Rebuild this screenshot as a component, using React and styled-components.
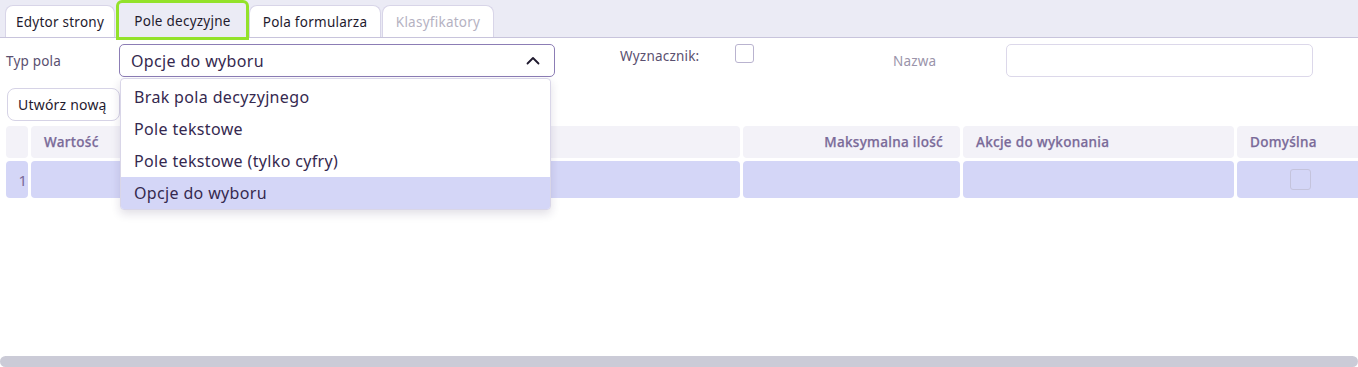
import React from "react";
import styled, { createGlobalStyle, css } from "styled-components";

const Global = createGlobalStyle`
  html, body { margin: 0; padding: 0; background: #ffffff; }
  body { font-family: "Noto Sans", "Open Sans", sans-serif; overflow: hidden; }
  * { box-sizing: border-box; }
`;

const Page = styled.div`
  height: 367px;
  display: flex;
  flex-direction: column;
  position: relative;
`;

const TabBar = styled.div`
  display: flex;
  align-items: flex-end;
  gap: 1px;
  height: 38px;
  padding: 0 0 0 5px;
  background: #ebebf5;
  border-bottom: 1px solid #c8c4dc;
`;

const Tab = styled.div`
  height: 32px;
  display: flex;
  align-items: center;
  justify-content: center;
  width: ${(p) => p.$w}px;
  border: 1px solid #d8d5e8;
  border-bottom: none;
  border-radius: 8px 8px 0 0;
  background: #ffffff;
  font-size: 13.5px;
  letter-spacing: 0.25px;
  color: #1f1a2e;
  ${(p) =>
    p.$active &&
    css`
      background: #ebebf5;
      outline: 3px solid #93e22a;
      outline-offset: 0;
      height: 34px;
      border: none;
      border-radius: 3px 3px 0 0;
      padding-top: 1px;
    `}
  ${(p) =>
    p.$disabled &&
    css`
      color: #b5b2c2;
    `}
`;

const FormRow = styled.div`
  display: flex;
  align-items: center;
  padding: 6px 0 0 6px;
  height: 39px;
`;

const Label = styled.div`
  width: ${(p) => p.$w}px;
  font-size: 13.5px;
  letter-spacing: 0.2px;
  color: ${(p) => (p.$muted ? "#9a94aa" : "#5a5070")};
  align-self: ${(p) => (p.$top ? "flex-start" : "center")};
  padding-top: ${(p) => (p.$top ? "3px" : "0")};
`;

const SelectWrap = styled.div`
  position: relative;
  width: 436px;
  margin-right: 65px;
`;

const SelectBox = styled.div`
  height: 33px;
  border: 1px solid #8c7db5;
  border-radius: 5px;
  display: flex;
  align-items: center;
  justify-content: space-between;
  padding: 0 14px 0 11px;
  font-size: 16px;
  letter-spacing: 0.35px;
  color: #35294f;
  background: #fff;
`;

const Menu = styled.div`
  position: absolute;
  top: 34px;
  left: 1px;
  width: 431px;
  background: #fff;
  border: 1px solid #d9d6e8;
  border-radius: 4px;
  box-shadow: 0 4px 10px rgba(40, 30, 80, 0.14);
  padding: 2px 0 0;
  z-index: 10;
  overflow: hidden;
`;

const MenuItem = styled.div`
  height: 32px;
  display: flex;
  align-items: center;
  padding-left: 13px;
  font-size: 16px;
  letter-spacing: 0.35px;
  color: #35294f;
  background: ${(p) => (p.$selected ? "#d4d6f7" : "#fff")};
`;

const Check = styled.div`
  width: ${(p) => p.$s}px;
  height: ${(p) => p.$s}px;
  border: 1px solid ${(p) => p.$c || "#b9b3cf"};
  border-radius: 3px;
  background: transparent;
  align-self: ${(p) => (p.$top ? "flex-start" : "center")};
  margin-right: ${(p) => p.$mr || 0}px;
`;

const TextInput = styled.div`
  width: 307px;
  height: 33px;
  border: 1px solid #dcd8ea;
  border-radius: 5px;
  background: #fff;
`;

const ActionRow = styled.div`
  padding: 11px 0 0 7px;
  height: 49px;
`;

const Button = styled.div`
  display: inline-flex;
  align-items: center;
  height: 33px;
  padding: 0 12px 0 10px;
  border: 1px solid #d6d3e6;
  border-radius: 8px;
  font-size: 14px;
  letter-spacing: 0.2px;
  color: #1f1a2e;
  background: #fff;
`;

const Grid = styled.div`
  display: grid;
  grid-template-columns: 22px 709px 217px 271px 130px;
  column-gap: 3px;
  row-gap: 3px;
  padding-left: 6px;
  width: 1400px;
`;

const HeadCell = styled.div`
  height: 32px;
  background: #f3f2f8;
  border-radius: 4px;
  display: flex;
  align-items: center;
  justify-content: ${(p) => (p.$right ? "flex-end" : "flex-start")};
  padding: 0 ${(p) => (p.$right ? "17px" : "0")} 0 ${(p) => (p.$right ? "0" : "13px")};
  font-size: 13.5px;
  letter-spacing: 0.3px;
  font-weight: 500;
  color: #7a6a99;
  -webkit-text-stroke: 0.25px #7a6a99;
`;

const Cell = styled.div`
  height: 37px;
  background: #d4d6f7;
  border-radius: 4px;
  display: flex;
  align-items: center;
  justify-content: ${(p) => p.$justify || "flex-start"};
  padding-right: ${(p) => p.$pr || 0}px;
  padding-left: ${(p) => p.$pl || 0}px;
  font-size: 15px;
  color: #7a6a99;
`;

const Spacer = styled.div`
  flex: 1;
`;

const ScrollTrack = styled.div`
  height: 11px;
  background: #cbcbd7;
  border-radius: 6px;
`;

const Chevron = () => (
  <svg width="14" height="9" viewBox="0 0 14 9" fill="none">
    <path d="M1.5 7.5 L7 2 L12.5 7.5" stroke="#1f1a2e" strokeWidth="1.8" strokeLinecap="round" strokeLinejoin="round" />
  </svg>
);

export default function App() {
  const options = [
    "Brak pola decyzyjnego",
    "Pole tekstowe",
    "Pole tekstowe (tylko cyfry)",
    "Opcje do wyboru",
  ];
  return (
    <Page>
      <Global />
      <TabBar>
        <Tab $w={110}>Edytor strony</Tab>
        <Tab $w={127} $active style={{ marginLeft: 3, marginRight: 2 }}>Pole decyzyjne</Tab>
        <Tab $w={132}>Pola formularza</Tab>
        <Tab $w={112} $disabled>Klasyfikatory</Tab>
      </TabBar>
      <FormRow>
        <Label $w={113}>Typ pola</Label>
        <SelectWrap>
          <SelectBox>
            <span>Opcje do wyboru</span>
            <Chevron />
          </SelectBox>
          <Menu>
            {options.map((o, i) => (
              <MenuItem key={o} $selected={i === 3}>{o}</MenuItem>
            ))}
          </Menu>
        </SelectWrap>
        <Label $w={115} $top>Wyznacznik:</Label>
        <Check $s={19} $top $mr={139} />
        <Label $w={113} $muted>Nazwa</Label>
        <TextInput />
      </FormRow>
      <ActionRow>
        <Button>Utwórz nową</Button>
      </ActionRow>
      <Grid>
        <HeadCell />
        <HeadCell>Wartość</HeadCell>
        <HeadCell $right>Maksymalna ilość</HeadCell>
        <HeadCell>Akcje do wykonania</HeadCell>
        <HeadCell>Domyślna</HeadCell>
        <Cell $justify="flex-end" $pr={1}>1</Cell>
        <Cell />
        <Cell />
        <Cell />
        <Cell $pl={53}>
          <Check $s={21} $c="#c4c3dc" />
        </Cell>
      </Grid>
      <Spacer />
      <ScrollTrack />
    </Page>
  );
}
